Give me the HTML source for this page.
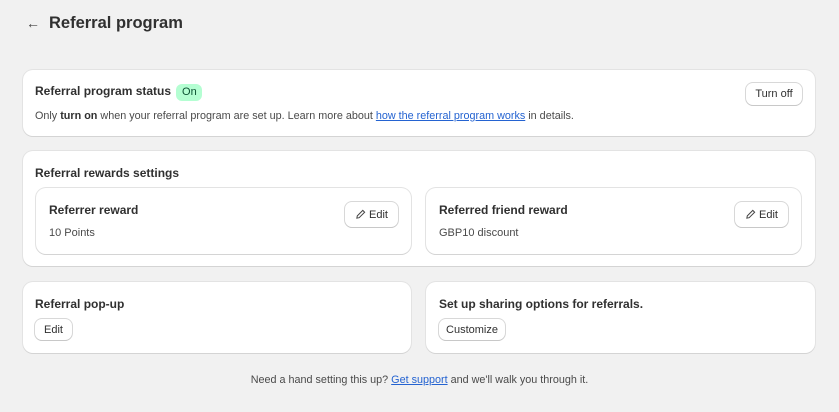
<!DOCTYPE html>
<html><head><style>
*{box-sizing:border-box;margin:0;padding:0}
body{width:839px;height:412px;background:#f1f1f1;font-family:"Liberation Sans",sans-serif;font-size:12px;color:#303030;position:relative;overflow:hidden}
.abs{position:absolute}
.card{position:absolute;background:#fff;border-radius:10px;box-shadow:0 1px 0 #d4d4d4,0 0 0 1px #e3e3e3}
.in{position:absolute;background:#fff;border-radius:10px;box-shadow:0 1px 0 #d4d4d4,0 0 0 1px #e3e3e3}
b{font-weight:bold;color:#303030}
.h{font-weight:bold;font-size:12px;color:#303030;position:absolute;white-space:nowrap}
.btn{position:absolute;background:#fff;border-radius:7px;box-shadow:0 1px 0 #c8c8c8,0 0 0 1px #d8d8d8;font-size:11px;color:#303030;display:flex;align-items:center;justify-content:center;gap:3px}
a{color:#2463d1;text-decoration:underline}
.t{position:absolute;color:#4a4a4a;white-space:nowrap}
</style></head><body>
<div class="abs" style="left:26px;top:15px;font-size:14px;color:#444">&#8592;</div>
<div class="abs" style="left:49px;top:14px;font-size:16.5px;font-weight:bold;color:#303030">Referral program</div>

<div class="card" style="left:23px;top:70px;width:792px;height:66px">
 <div class="h" style="left:12px;top:14px">Referral program status <span style="display:inline-block;margin-left:2px;width:26px;height:17px;background:#b4fed2;border-radius:6px;font-size:11px;font-weight:normal;color:#0c5132;text-align:center;line-height:17px">On</span></div>
 <div class="t" style="left:12px;top:40px;font-size:10.8px">Only <b>turn on</b> when your referral program are set up. Learn more about <a>how the referral program works</a> in details.</div>
 <div class="btn" style="left:723px;top:13px;width:56px;height:22px">Turn off</div>
</div>

<div class="card" style="left:23px;top:151px;width:792px;height:115px">
 <div class="h" style="left:12px;top:15px">Referral rewards settings</div>
</div>
<div class="in" style="left:36px;top:188px;width:375px;height:66px">
 <div class="h" style="left:13px;top:15px">Referrer reward</div>
 <div class="t" style="left:13px;top:39px;font-size:11px">10 Points</div>
 <div class="btn" style="left:309px;top:14px;width:53px;height:25px"><svg width="11" height="11" viewBox="0 0 12 12"><path d="M2 10l.5-2.5L8.5 1.5l2 2-6 6z" fill="none" stroke="#444" stroke-width="1.1"/></svg>Edit</div>
</div>
<div class="in" style="left:426px;top:188px;width:375px;height:66px">
 <div class="h" style="left:13px;top:15px">Referred friend reward</div>
 <div class="t" style="left:13px;top:39px;font-size:11px">GBP10 discount</div>
 <div class="btn" style="left:309px;top:14px;width:53px;height:25px"><svg width="11" height="11" viewBox="0 0 12 12"><path d="M2 10l.5-2.5L8.5 1.5l2 2-6 6z" fill="none" stroke="#444" stroke-width="1.1"/></svg>Edit</div>
</div>

<div class="card" style="left:23px;top:282px;width:388px;height:71px">
 <div class="h" style="left:12px;top:15px">Referral pop-up</div>
 <div class="btn" style="left:12px;top:37px;width:37px;height:21px">Edit</div>
</div>
<div class="card" style="left:426px;top:282px;width:389px;height:71px">
 <div class="h" style="left:13px;top:15px">Set up sharing options for referrals.</div>
 <div class="btn" style="left:13px;top:37px;width:66px;height:21px">Customize</div>
</div>

<div class="t" style="left:0;width:839px;top:374px;text-align:center;font-size:10.8px">Need a hand setting this up? <a>Get support</a> and we'll walk you through it.</div>
</body></html>
